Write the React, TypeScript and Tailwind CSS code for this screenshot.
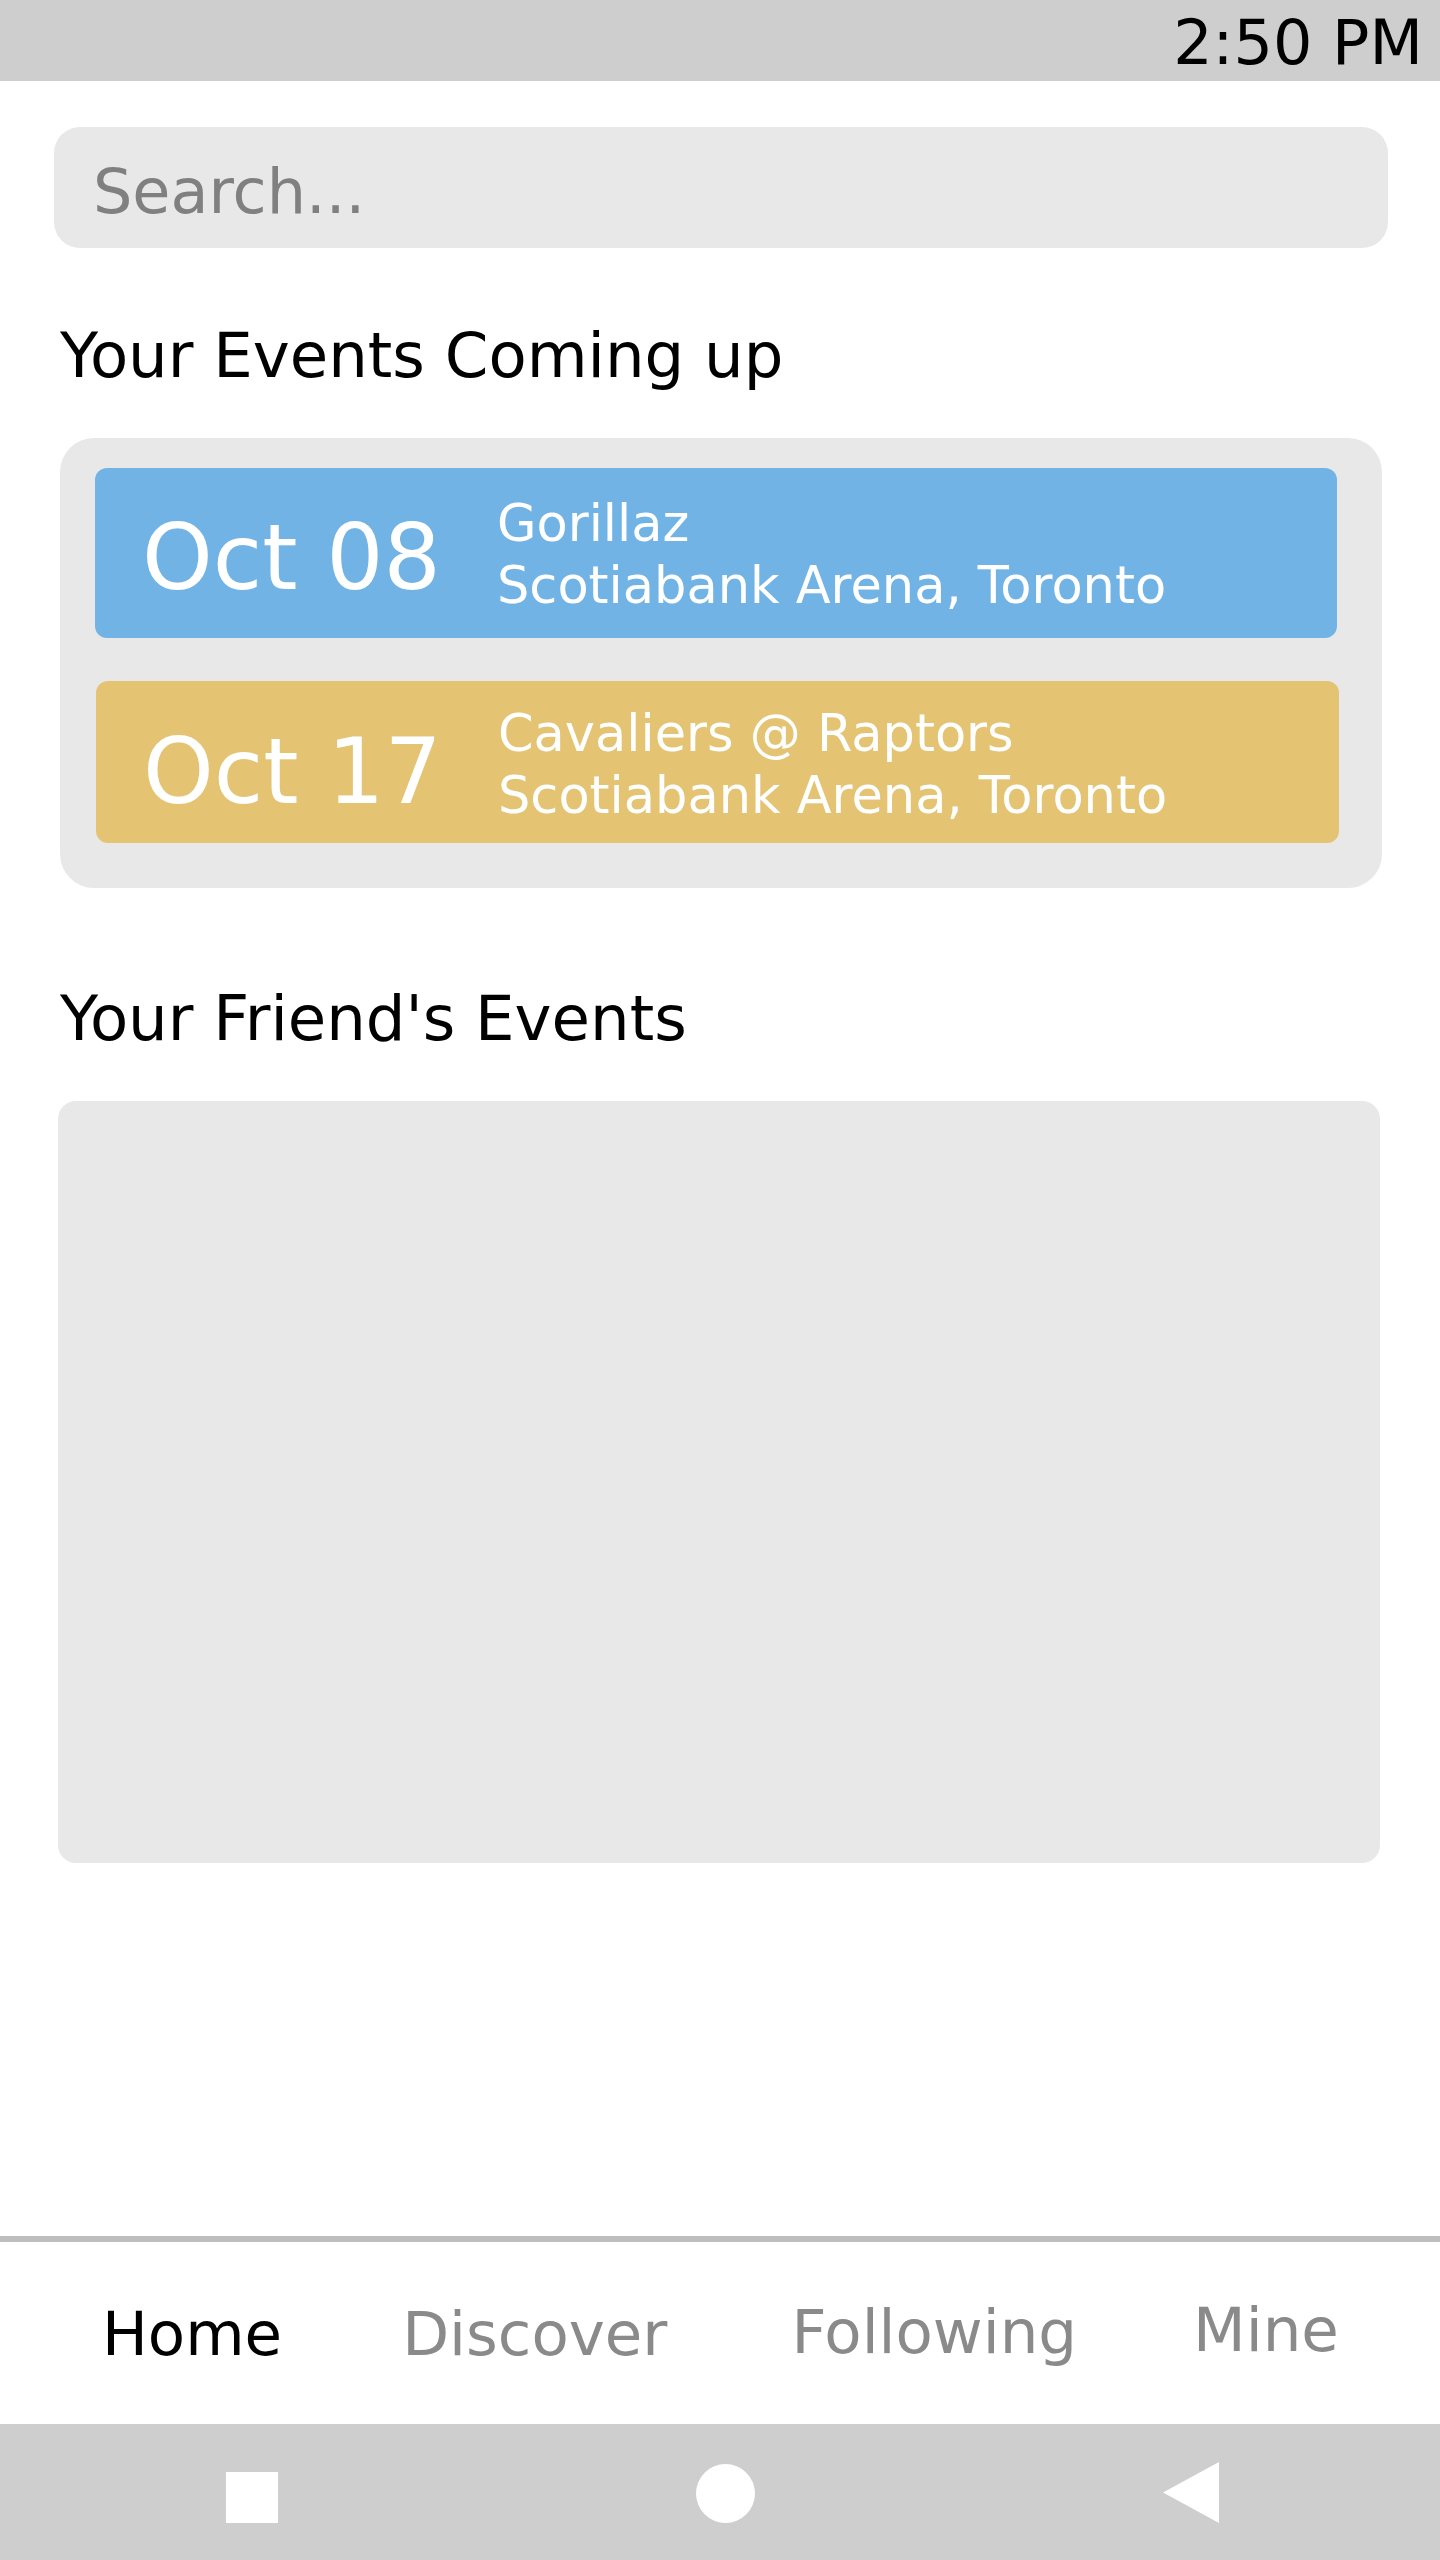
const events = [
  {
    date: 'Oct 08',
    title: 'Gorillaz',
    place: 'Scotiabank Arena, Toronto',
    card: 'h-[170px] ml-[35px] mr-[45px] bg-[#72b3e5]',
    dateShift: 'mt-[10px]',
    textShift: 'mt-[4px]',
  },
  {
    date: 'Oct 17',
    title: 'Cavaliers @ Raptors',
    place: 'Scotiabank Arena, Toronto',
    card: 'h-[162px] ml-[36px] mr-[43px] bg-[#e4c373]',
    dateShift: 'mt-[20px]',
    textShift: 'mt-[6px]',
  },
];

const tabs = [
  { label: 'Home', cls: 'ml-[102px] mt-[2px] text-black' },
  { label: 'Discover', cls: 'ml-[120px] mt-[2px] text-[#8a8a8a]' },
  { label: 'Following', cls: 'ml-[124px] text-[#8a8a8a]' },
  { label: 'Mine', cls: 'ml-[116px] -mt-[2px] text-[#8a8a8a]' },
];

function EventCard({ e }: { e: (typeof events)[number] }) {
  return (
    <div className={`flex items-center rounded-[12px] text-white ${e.card}`}>
      <div className={`w-[402px] shrink-0 pl-[47px] text-[90px] leading-none ${e.dateShift}`}>
        {e.date}
      </div>
      <div className={`text-[51px] leading-[62px] ${e.textShift}`}>
        <div>{e.title}</div>
        <div>{e.place}</div>
      </div>
    </div>
  );
}

export default function App() {
  return (
    <div
      className="flex h-[2560px] w-[1440px] flex-col bg-white"
      style={{ fontFamily: '"DejaVu Sans", Verdana, sans-serif' }}
    >
      {/* status bar */}
      <div className="flex h-[81px] shrink-0 justify-end bg-[#cecece] pr-[17px] pt-[12px]">
        <span className="text-[62px] leading-none text-black">2:50 PM</span>
      </div>

      <div className="flex-1">
        <div className="ml-[54px] mr-[52px] mt-[46px] h-[121px] rounded-[26px] bg-[#e8e8e8] pl-[39px] pt-[34px] text-[62px] leading-none text-[#808080]">
          Search...
        </div>

        <h2 className="ml-[60px] mt-[77px] text-[62.5px] leading-none text-black">Your Events Coming up</h2>

        <div className="ml-[60px] mr-[58px] mt-[50px] flex h-[450px] flex-col gap-[43px] rounded-[34px] bg-[#e8e8e8] pt-[30px]">
          {events.map((e) => (
            <EventCard key={e.date} e={e} />
          ))}
        </div>

        <h2 className="ml-[60px] mt-[100px] text-[62.5px] leading-none text-black">Your Friend's Events</h2>

        <div className="ml-[58px] mt-[51px] h-[762px] w-[1322px] rounded-[18px] bg-[#e8e8e8]" />
      </div>

      {/* tab bar */}
      <div className="flex h-[188px] shrink-0 items-start border-t-[6px] border-[#bebebe] pt-[59px] text-[61px] leading-none">
        {tabs.map((t) => (
          <span key={t.label} className={t.cls}>
            {t.label}
          </span>
        ))}
      </div>

      {/* system nav */}
      <div className="flex h-[136px] shrink-0 items-end bg-[#cecece] pb-[37px]">
        <div className="ml-[226px] h-[51px] w-[52px] bg-white" />
        <div className="ml-[418px] h-[59px] w-[59px] rounded-full bg-white" />
        <svg className="ml-[408px]" width="56" height="61" viewBox="0 0 56 61">
          <polygon points="56,0 56,61 0,30.5" fill="white" />
        </svg>
      </div>
    </div>
  );
}
